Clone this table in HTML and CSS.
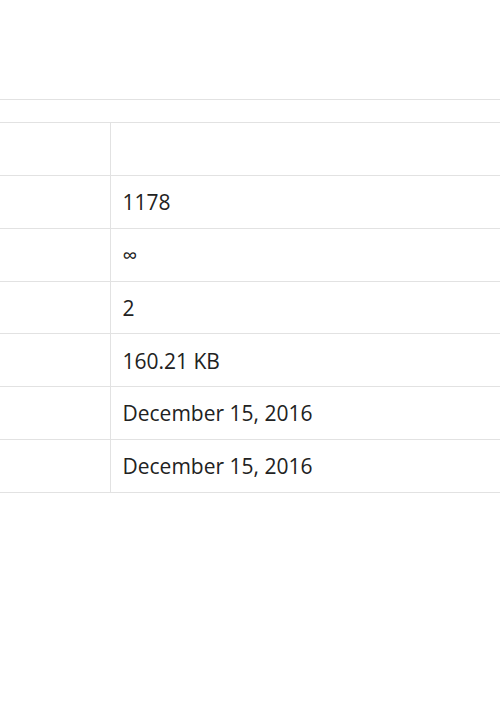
FILE: index.html
```html
<!DOCTYPE html>
<html>
<head>
<meta charset="utf-8">
<link rel="stylesheet" href="styles.css">
</head>
<body>
<div class="page">
  <div class="rule"></div>
  <table class="meta">
    <tbody>
      <tr><td class="key"></td><td class="val"></td></tr>
      <tr><td class="key"></td><td class="val">1178</td></tr>
      <tr><td class="key"></td><td class="val">∞</td></tr>
      <tr><td class="key"></td><td class="val">2</td></tr>
      <tr><td class="key"></td><td class="val">160.21 KB</td></tr>
      <tr><td class="key"></td><td class="val">December 15, 2016</td></tr>
      <tr><td class="key"></td><td class="val">December 15, 2016</td></tr>
    </tbody>
  </table>
</div>
</body>
</html>
```
FILE: styles.css
```css
html, body {
  margin: 0;
  padding: 0;
  background: #fff;
}
.page {
  padding-top: 99px;
  font-family: "Open Sans", "Liberation Sans", sans-serif;
  color: #222;
}
.rule {
  height: 22px;
  border-top: 1px solid #e2e2e2;
}
.meta {
  width: 100%;
  border-collapse: collapse;
  border-top: 1px solid #e2e2e2;
}
.meta tr {
  height: 52.86px;
}
.meta td {
  padding: 2px 12px 0;
  border-bottom: 1px solid #e2e2e2;
  font-size: 21px;
  line-height: 1.5;
  vertical-align: middle;
}
.meta td.key {
  width: 110px;
  padding: 0;
  border-right: 1px solid #e2e2e2;
  box-sizing: border-box;
}
```
